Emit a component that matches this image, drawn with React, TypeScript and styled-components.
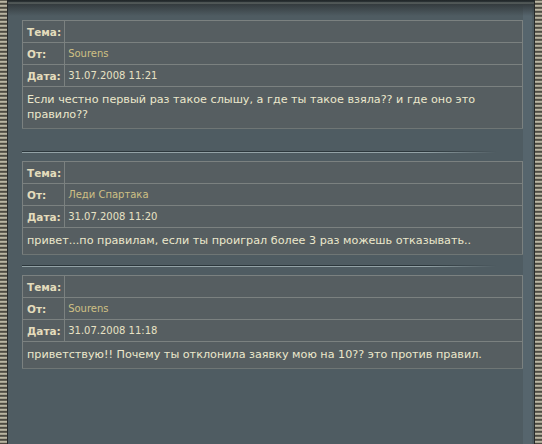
import React from "react"
import styled, { createGlobalStyle } from "styled-components"

const GlobalStyle = createGlobalStyle`
  html, body {
    margin: 0;
    padding: 0;
    background: #4f5c62;
  }
`

const chain = `
  repeating-linear-gradient(
    180deg,
    #2b2a26 0px,
    #9a9684 1px,
    #d8d4c0 2px,
    #6e6a5c 3px,
    #2b2a26 4px
  )
`

const Frame = styled.div`
  display: flex;
  width: 542px;
  height: 444px;
  overflow: hidden;
  font-family: Tahoma, "DejaVu Sans", Verdana, sans-serif;
`

const ChainBorder = styled.div<{ side: "left" | "right" }>`
  width: 7px;
  flex: 0 0 7px;
  background: ${chain};
  border-${({ side }) => (side === "left" ? "right" : "left")}: 1px solid #26292a;
`

const Content = styled.div`
  flex: 1;
  display: flex;
  flex-direction: column;
  background:
    linear-gradient(180deg, #1f2426 0px, #2e3538 2px, #6d7470 3px, #343b3e 4px, rgba(79, 92, 98, 0) 16px),
    linear-gradient(90deg, #4f5c62 0, #4f5c62 515px, #56656d 515px, #56656d 524px, #4f5c62 524px);
  padding: 20px 0 0 14px;
`

const Column = styled.div`
  display: flex;
  width: 512px;
  flex-direction: column;
`

const Message = styled.table`
  width: 501px;
  border-collapse: collapse;
  background: #565e61;
  border: 1px solid #6f7675;
  font-size: 11px;
  color: #e6dfbf;
`

const Label = styled.th`
  width: 34px;
  text-align: left;
  font-weight: bold;
  font-size: 10.5px;
  color: #e4dcbc;
  padding: 0 3px 0 4px;
  height: 21px;
  border: 1px solid #7b8180;
  white-space: nowrap;
`

const Value = styled.td<{ author?: boolean }>`
  padding: 0 3px;
  height: 21px;
  border: 1px solid #7b8180;
  color: ${({ author }) => (author ? "#cfc085" : "#e8e2c4")};
  font-size: 10px;
`

const Body = styled.td`
  padding: 5px 4px 6px;
  font-size: 11.2px;
  line-height: 15px;
  color: #ece8cc;
  border: 1px solid #7b8180;
  border-bottom-color: #6f7675;
`

const Separator = styled.div<{ gap: number }>`
  width: 474px;
  height: 2px;
  margin: ${({ gap }) => gap}px 0 8px;
  background: linear-gradient(180deg, #2c373c 0, #2c373c 1px, #93a2a6 1px);
  mask-image: linear-gradient(90deg, #000 85%, transparent);
`

type Post = {
  author: string
  date: string
  text: string
  gapAfter: number
}

const posts: Post[] = [
  {
    author: "Sourens",
    date: "31.07.2008 11:21",
    text: "Если честно первый раз такое слышу, а где ты такое взяла?? и где оно это правило??",
    gapAfter: 22,
  },
  {
    author: "Леди Спартака",
    date: "31.07.2008 11:20",
    text: "привет...по правилам, если ты проиграл более 3 раз можешь отказывать..",
    gapAfter: 10,
  },
  {
    author: "Sourens",
    date: "31.07.2008 11:18",
    text: "приветствую!! Почему ты отклонила заявку мою на 10?? это против правил.",
    gapAfter: 0,
  },
]

const MessageBlock = ({ post }: { post: Post }) => (
  <Message>
    <tbody>
      <tr>
        <Label>Тема:</Label>
        <Value />
      </tr>
      <tr>
        <Label>От:</Label>
        <Value author>{post.author}</Value>
      </tr>
      <tr>
        <Label>Дата:</Label>
        <Value>{post.date}</Value>
      </tr>
      <tr>
        <Body colSpan={2}>{post.text}</Body>
      </tr>
    </tbody>
  </Message>
)

const App = () => (
  <Frame>
    <GlobalStyle />
    <ChainBorder side="left" />
    <Content>
      <Column>
        {posts.map((post, i) => (
          <React.Fragment key={post.date}>
            <MessageBlock post={post} />
            {i < posts.length - 1 && <Separator gap={post.gapAfter} />}
          </React.Fragment>
        ))}
      </Column>
    </Content>
    <ChainBorder side="right" />
  </Frame>
)

export default App
